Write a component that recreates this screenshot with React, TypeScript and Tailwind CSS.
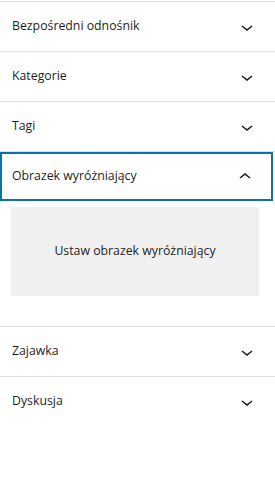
const ChevronDown = () => (
  <svg width="24" height="24" viewBox="0 0 24 24" className="fill-[#1e1e1e]">
    <path d="M17.5 11.6L12 16l-5.5-4.4.9-1.2L12 14l4.6-3.6z" />
  </svg>
);

const ChevronUp = () => (
  <svg width="24" height="24" viewBox="0 0 24 24" className="fill-[#1e1e1e]">
    <path d="M6.5 12.4L12 8l5.5 4.4-.9 1.2L12 10l-4.6 3.6z" />
  </svg>
);

function PanelHeader({ title, open = false, focused = false }: { title: string; open?: boolean; focused?: boolean }) {
  return (
    <button
      className={
        "flex h-[49px] w-full items-center justify-between pl-3 pr-4 text-left text-[12.3px] text-[#1e1e1e] " +
        (focused ? "shadow-[inset_0_0_0_2px_#0675a6]" : "")
      }
    >
      <span>{title}</span>
      {open ? <ChevronUp /> : <ChevronDown />}
    </button>
  );
}

export default function App() {
  const closed = ["Bezpośredni odnośnik", "Kategorie", "Tagi"];
  return (
    <div className="h-[480px] w-[275px] bg-white pt-px font-['Open_Sans',sans-serif]">
      {closed.map((title) => (
        <div key={title} className="border-t border-[#e0e0e0]">
          <PanelHeader title={title} />
        </div>
      ))}
      <div className="border-t border-[#e0e0e0]">
        <div className="pr-[2px]">
          <PanelHeader title="Obrazek wyróżniający" open focused />
        </div>
        <div className="pb-[30px] pl-[11px] pr-4 pt-[6px]">
          <div className="flex h-[89px] items-center justify-center bg-[#f0f0f0] text-[12.3px] text-[#1e1e1e]">
            Ustaw obrazek wyróżniający
          </div>
        </div>
      </div>
      <div className="border-t border-[#e0e0e0]">
        <PanelHeader title="Zajawka" />
      </div>
      <div className="border-t border-[#e0e0e0]">
        <PanelHeader title="Dyskusja" />
      </div>
    </div>
  );
}
